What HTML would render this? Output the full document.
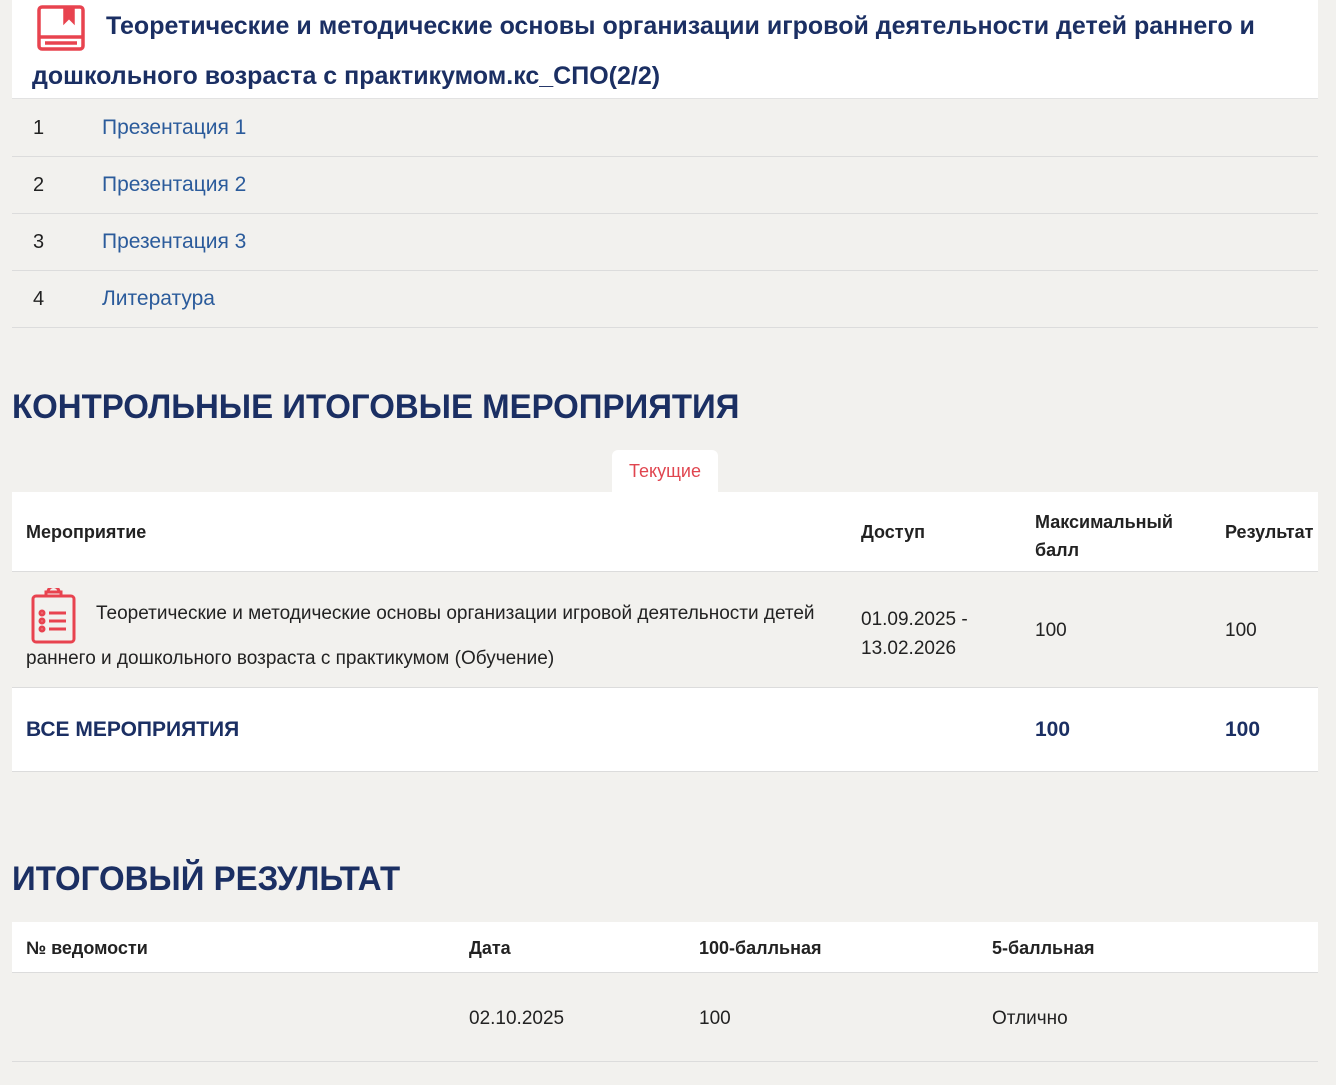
<!DOCTYPE html>
<html><head><meta charset="utf-8"><style>
*{margin:0;padding:0;box-sizing:border-box}
body{width:1336px;height:1085px;background:#f2f1ee;font-family:"Liberation Sans","DejaVu Sans",sans-serif;color:#222;position:relative;overflow:hidden}
.abs{position:absolute}
.title{left:12px;top:0;width:1306px;height:99px;background:#fff;border-bottom:1px solid #e2e2e2}
.tt{font-weight:bold;font-size:25px;color:#1b2f63;white-space:nowrap}
.row{left:12px;width:1306px;height:57px;border-bottom:1px solid #dcdcdc}
.num{left:21px;top:17px;font-size:20px;color:#222}
.lnk{left:90px;top:16px;font-size:21px;color:#2b5b9b}
.h{font-weight:bold;color:#1b2f63;font-size:34px;white-space:nowrap;transform-origin:left top}
.th{font-weight:bold;font-size:18px;color:#222}
.td{font-size:19px;color:#222}
</style></head><body>
<div class="abs title"></div>
<svg class="abs" style="left:37px;top:5px" width="48" height="46" viewBox="0 0 48 46" fill="none" stroke="#e8434f" stroke-width="3.5"><rect x="2" y="2" width="44" height="42" rx="3"/><line x1="2" y1="32" x2="46" y2="32"/><line x1="8" y1="38" x2="40" y2="38"/><path d="M28 2v14l4-4 4 4V2" fill="#e8434f"/></svg>
<div class="abs tt" style="left:106px;top:12px">Теоретические и методические основы организации игровой деятельности детей раннего и</div>
<div class="abs tt" style="left:32px;top:62px">дошкольного возраста с практикумом.кс_СПО(2/2)</div>

<div class="abs row" style="top:100px"><span class="abs num">1</span><span class="abs lnk">Презентация 1</span></div>
<div class="abs row" style="top:157px"><span class="abs num">2</span><span class="abs lnk">Презентация 2</span></div>
<div class="abs row" style="top:214px"><span class="abs num">3</span><span class="abs lnk">Презентация 3</span></div>
<div class="abs row" style="top:271px"><span class="abs num">4</span><span class="abs lnk">Литература</span></div>

<div class="abs h" style="left:12px;top:388px;transform:scaleX(0.97)">КОНТРОЛЬНЫЕ ИТОГОВЫЕ МЕРОПРИЯТИЯ</div>

<div class="abs" style="left:612px;top:450px;width:106px;height:44px;background:#fff;border-radius:6px 6px 0 0;color:#e0454f;font-size:18px;text-align:center;padding-top:11px">Текущие</div>
<div class="abs" style="left:12px;top:492px;width:1306px;height:80px;background:#fff;border-bottom:1px solid #dcdcdc"></div>
<div class="abs th" style="left:26px;top:522px">Мероприятие</div>
<div class="abs th" style="left:861px;top:522px">Доступ</div>
<div class="abs th" style="left:1035px;top:508px;line-height:28px">Максимальный<br>балл</div>
<div class="abs th" style="left:1225px;top:522px">Результат</div>

<div class="abs" style="left:12px;top:572px;width:1306px;height:116px;border-bottom:1px solid #dcdcdc"></div>
<svg class="abs" style="left:31px;top:588px" width="45" height="56" viewBox="0 0 45 56" fill="none" stroke="#e8434f" stroke-width="3"><rect x="2" y="8" width="41" height="46" rx="3"/><path d="M15 8V4h15v4M17 4a5 5 0 0 1 11 0"/><circle cx="11" cy="25" r="2"/><circle cx="11" cy="33" r="2"/><circle cx="11" cy="41" r="2"/><path d="M18 25h17M18 33h17M18 41h17"/></svg>
<div class="abs td" style="left:96px;top:603px">Теоретические и методические основы организации игровой деятельности детей</div>
<div class="abs td" style="left:26px;top:648px">раннего и дошкольного возраста с практикумом (Обучение)</div>
<div class="abs td" style="left:861px;top:605px;line-height:29px">01.09.2025 -<br>13.02.2026</div>
<div class="abs td" style="left:1035px;top:620px">100</div>
<div class="abs td" style="left:1225px;top:620px">100</div>

<div class="abs" style="left:12px;top:688px;width:1306px;height:84px;background:#fff;border-bottom:1px solid #dcdcdc"></div>
<div class="abs" style="left:26px;top:718px;font-weight:bold;font-size:21px;color:#1b2f63">ВСЕ МЕРОПРИЯТИЯ</div>
<div class="abs" style="left:1035px;top:718px;font-weight:bold;font-size:21px;color:#1b2f63">100</div>
<div class="abs" style="left:1225px;top:718px;font-weight:bold;font-size:21px;color:#1b2f63">100</div>

<div class="abs h" style="left:12px;top:860px;transform:scaleX(0.97)">ИТОГОВЫЙ РЕЗУЛЬТАТ</div>

<div class="abs" style="left:12px;top:922px;width:1306px;height:51px;background:#fff;border-bottom:1px solid #dcdcdc"></div>
<div class="abs th" style="left:26px;top:938px">№ ведомости</div>
<div class="abs th" style="left:469px;top:938px">Дата</div>
<div class="abs th" style="left:699px;top:938px">100-балльная</div>
<div class="abs th" style="left:992px;top:938px">5-балльная</div>
<div class="abs" style="left:12px;top:973px;width:1306px;height:89px;border-bottom:1px solid #dcdcdc"></div>
<div class="abs td" style="left:469px;top:1008px">02.10.2025</div>
<div class="abs td" style="left:699px;top:1008px">100</div>
<div class="abs td" style="left:992px;top:1008px">Отлично</div>
</body></html>
